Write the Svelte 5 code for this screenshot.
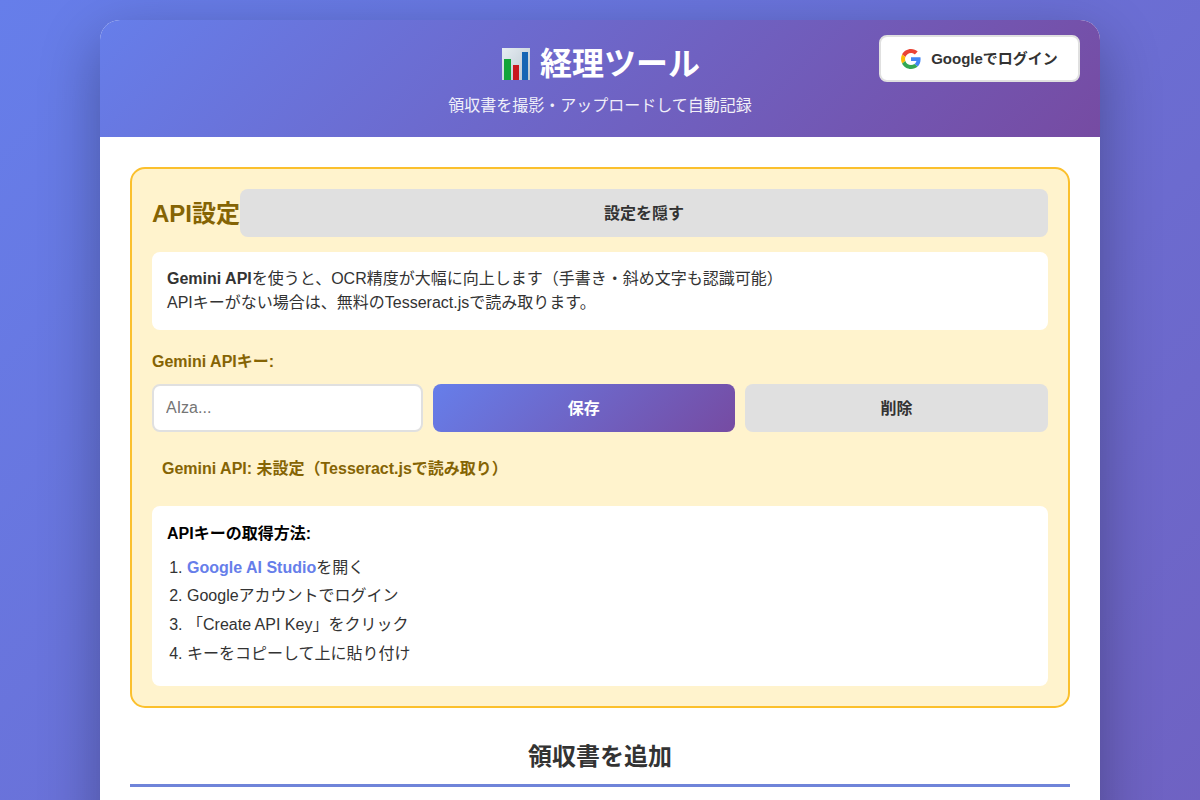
<script>
    const steps = [
        "を開く",
        "Googleアカウントでログイン",
        "「Create API Key」をクリック",
        "キーをコピーして上に貼り付け"
    ];
</script>

<div class="container">
    <header class="header">
        <h1>
            <svg class="chart" viewBox="0 0 28 32" width="28" height="32" aria-hidden="true">
                <defs>
                    <linearGradient id="paper" x1="0" y1="0" x2="1" y2="1">
                        <stop offset="0" stop-color="#e6edf2" />
                        <stop offset="1" stop-color="#b9c6d0" />
                    </linearGradient>
                </defs>
                <rect width="28" height="32" fill="url(#paper)" />
                <rect x="2" y="11" width="7" height="21" fill="#12a53a" />
                <rect x="11" y="17" width="6" height="15" fill="#c8171d" />
                <rect x="20" y="4" width="6" height="28" fill="#1565b4" />
            </svg>
            経理ツール
        </h1>
        <p>領収書を撮影・アップロードして自動記録</p>
        <button class="login">
            <svg viewBox="0 0 48 48" width="20" height="20" aria-hidden="true">
                <path fill="#EA4335" d="M24 9.5c3.54 0 6.71 1.22 9.21 3.6l6.85-6.85C35.9 2.38 30.47 0 24 0 14.62 0 6.51 5.38 2.56 13.22l7.98 6.19C12.43 13.72 17.74 9.5 24 9.5z" />
                <path fill="#4285F4" d="M46.98 24.55c0-1.57-.15-3.09-.38-4.55H24v9.02h12.94c-.58 2.96-2.26 5.48-4.78 7.18l7.73 6c4.51-4.18 7.09-10.36 7.09-17.65z" />
                <path fill="#FBBC05" d="M10.53 28.59c-.48-1.45-.76-2.99-.76-4.59s.27-3.14.76-4.59l-7.98-6.19C.92 16.46 0 20.12 0 24c0 3.88.92 7.54 2.56 10.78l7.97-6.19z" />
                <path fill="#34A853" d="M24 48c6.48 0 11.93-2.13 15.89-5.81l-7.73-6c-2.15 1.45-4.92 2.3-8.16 2.3-6.26 0-11.57-4.22-13.47-9.91l-7.98 6.19C6.51 42.62 14.62 48 24 48z" />
            </svg>
            <span>Googleでログイン</span>
        </button>
    </header>

    <main class="content">
        <section class="api">
            <div class="api-head">
                <h3>API設定</h3>
                <button class="btn gray">設定を隠す</button>
            </div>
            <div class="note">
                <strong>Gemini API</strong>を使うと、OCR精度が大幅に向上します（手書き・斜め文字も認識可能）<br />
                APIキーがない場合は、無料のTesseract.jsで読み取ります。
            </div>
            <label for="key">Gemini APIキー:</label>
            <div class="key-row">
                <input id="key" type="password" placeholder="AIza..." />
                <button class="btn primary">保存</button>
                <button class="btn gray">削除</button>
            </div>
            <div class="status">Gemini API: 未設定（Tesseract.jsで読み取り）</div>
            <div class="howto">
                <strong>APIキーの取得方法:</strong>
                <ol>
                    {#each steps as step, i}
                        <li>{#if i === 0}<a href="#top">Google AI Studio</a>{/if}{step}</li>
                    {/each}
                </ol>
            </div>
        </section>

        <h2>領収書を追加</h2>
    </main>
</div>

<style>
    :global(html) {
        scrollbar-width: none;
    }

    :global(body) {
        margin: 0;
        padding: 20px;
        box-sizing: border-box;
        min-height: 100vh;
        background: linear-gradient(135deg, #667eea 0%, #764ba2 100%);
        font-family: "Liberation Sans", "Noto Sans CJK JP", sans-serif;
        color: #333;
    }

    .container {
        width: 1000px;
        min-height: 2400px;
        margin: 0 auto;
        background: #fff;
        border-radius: 20px;
        box-shadow: 0 20px 60px rgba(0, 0, 0, 0.3);
        overflow: hidden;
    }

    .header {
        position: relative;
        height: 117px;
        box-sizing: border-box;
        padding-top: 20px;
        text-align: center;
        color: #fff;
        background: linear-gradient(135deg, #667eea 0%, #764ba2 100%);
    }

    h1 {
        margin: 0 0 6px;
        display: flex;
        align-items: center;
        justify-content: center;
        gap: 10px;
        font-size: 32px;
        line-height: 48px;
        font-weight: 700;
    }

    .chart {
        width: 28px;
        height: 32px;
        margin-left: 2px;
    }

    .header p {
        margin: 0;
        font-size: 16px;
        line-height: 24px;
        opacity: 0.9;
    }

    .login {
        position: absolute;
        top: 15px;
        right: 20px;
        width: 201px;
        height: 47px;
        display: flex;
        align-items: center;
        justify-content: center;
        gap: 10px;
        background: #fff;
        border: 2px solid #e0e0e0;
        border-radius: 8px;
        font: inherit;
        font-size: 15px;
        font-weight: 600;
        color: #333;
    }

    .login span {
        margin-bottom: 3px;
    }

    .content {
        padding: 30px;
    }

    .api {
        background: #fff3cd;
        border: 2px solid #fbc02d;
        border-radius: 15px;
        padding: 20px;
    }

    .api-head {
        display: flex;
        align-items: center;
        margin-bottom: 15px;
    }

    h3 {
        margin: 0 0 4px;
        font-size: 24px;
        font-weight: 700;
        color: #856404;
        white-space: nowrap;
    }

    .btn {
        flex: 1;
        height: 48px;
        padding: 0 0 2px;
        border: none;
        border-radius: 8px;
        font: inherit;
        font-size: 16px;
        font-weight: 600;
        color: #333;
    }

    .gray {
        background: #e0e0e0;
    }

    .primary {
        color: #fff;
        background: linear-gradient(135deg, #667eea 0%, #764ba2 100%);
    }

    .note {
        padding: 15px;
        background: #fff;
        border-radius: 8px;
        font-size: 16px;
        line-height: 24px;
    }

    label {
        display: block;
        margin: 20px 0 10px;
        line-height: 24px;
        font-size: 16px;
        font-weight: 600;
        color: #856404;
    }

    .key-row {
        display: flex;
        gap: 10px;
    }

    input {
        width: 270.5px;
        height: 48px;
        padding: 0 12px;
        box-sizing: border-box;
        border: 2px solid #e0e0e0;
        border-radius: 8px;
        background: #fff;
        font: inherit;
        font-size: 16px;
    }

    .key-row .btn {
        flex: 1;
    }

    .status {
        margin: 15px 0;
        padding: 10px;
        font-size: 16px;
        line-height: 24px;
        font-weight: 600;
        color: #856404;
    }

    .howto {
        padding: 15px;
        background: #fff;
        border-radius: 8px;
        font-size: 16px;
        line-height: 25.6px;
    }

    .howto strong {
        color: #000;
    }

    ol {
        margin: 7px 0 2px;
        padding-left: 20px;
    }

    li {
        line-height: 28.8px;
    }

    a {
        color: #667eea;
        font-weight: 600;
        text-decoration: none;
    }

    h2 {
        margin: 31px 0 0;
        padding-bottom: 9px;
        border-bottom: 3px solid #6f84d9;
        text-align: center;
        font-size: 24px;
        line-height: 36px;
        font-weight: 700;
    }
</style>
